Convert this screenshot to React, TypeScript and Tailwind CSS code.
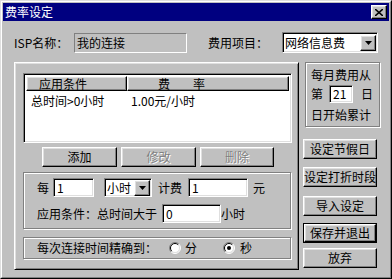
import React from "react";

const font = { fontFamily: '"Noto Sans CJK SC", "Liberation Sans", sans-serif' };

// raised / sunken bevels in the classic Windows look
const raised =
  "border border-t-white border-l-white border-r-black border-b-black shadow-[inset_-1px_-1px_0_#808080,inset_1px_1px_0_#dfdfdf]";
const sunken =
  "border border-t-[#808080] border-l-[#808080] border-r-white border-b-white shadow-[inset_1px_1px_0_#000,inset_-1px_-1px_0_#dfdfdf]";
const etched = "border border-[#808080] shadow-[inset_1px_1px_0_#fff,1px_1px_0_#fff]";

function Btn({ label, disabled, primary, className = "" }: { label: string; disabled?: boolean; primary?: boolean; className?: string }) {
  const inner = (
    <div className={`flex-1 flex items-center justify-center bg-[#c0c0c0] ${raised}`}>
      <span
        className={
          disabled ? "text-[#808080] [text-shadow:1px_1px_0_#fff]" : "text-black"
        }
      >
        {label}
      </span>
    </div>
  );
  if (primary) {
    return <div className={`flex border border-black ${className}`}>{inner}</div>;
  }
  return <div className={`flex ${className}`}>{inner}</div>;
}

function DropBtn() {
  return (
    <div className={`w-[16px] h-[16px] flex items-center justify-center bg-[#c0c0c0] ${raised}`}>
      <svg width="7" height="4" viewBox="0 0 7 4">
        <path d="M0 0H7L3.5 4Z" fill="#000" />
      </svg>
    </div>
  );
}

function Input({ value, className = "" }: { value: string; className?: string }) {
  return (
    <div className={`bg-white flex items-center pl-[3px] ${sunken} ${className}`}>
      <span className="leading-[12px]">{value}</span>
    </div>
  );
}

function Combo({ value, className = "" }: { value: string; className?: string }) {
  return (
    <div className={`bg-white flex items-center justify-between pl-[2px] pr-[1px] ${sunken} ${className}`}>
      <span className="leading-[12px]">{value}</span>
      <DropBtn />
    </div>
  );
}

function Radio({ checked }: { checked?: boolean }) {
  return (
    <svg width="12" height="12" viewBox="0 0 12 12" className="shrink-0">
      <circle cx="6" cy="6" r="5" fill="#fff" />
      <path d="M2.1 9.9A5.5 5.5 0 0 1 9.9 2.1" stroke="#808080" fill="none" />
      <path d="M9.9 2.1A5.5 5.5 0 0 1 2.1 9.9" stroke="#fff" fill="none" />
      <path d="M2.8 9.2A4.5 4.5 0 0 1 9.2 2.8" stroke="#000" fill="none" />
      <path d="M9.2 2.8A4.5 4.5 0 0 1 2.8 9.2" stroke="#dfdfdf" fill="none" />
      {checked && <circle cx="6" cy="6" r="2" fill="#000" />}
    </svg>
  );
}

export default function App() {
  return (
    <div
      className="w-[392px] h-[279px] bg-[#c0c0c0] text-[12px] leading-[12px] text-black border border-t-[#dfdfdf] border-l-[#dfdfdf] border-r-black border-b-black"
      style={font}
    >
      <div className="h-full flex flex-col border border-t-white border-l-white border-r-[#808080] border-b-[#808080] p-px">
        {/* title bar */}
        <div className="h-[18px] bg-[#000080] flex items-center justify-between pl-[2px] pr-[2px]">
          <span className="text-white text-[12px] leading-[12px]">费率设定</span>
          <div className={`w-[16px] h-[14px] flex items-center justify-center bg-[#c0c0c0] ${raised}`}>
            <svg width="8" height="7" viewBox="0 0 8 7">
              <path d="M0 0L8 7M8 0L0 7" stroke="#000" strokeWidth="1.6" />
            </svg>
          </div>
        </div>

        {/* body */}
        <div className="flex-1 flex flex-col pl-[11px]">
          {/* ISP row */}
          <div className="mt-[11px] h-[21px] flex items-center">
            <span className="w-[60px]">ISP名称：</span>
            <div className="w-[113px] h-[20px] flex items-center pl-[2px] border border-t-[#808080] border-l-[#808080] border-r-white border-b-white">
              我的连接
            </div>
            <span className="ml-[21px] w-[74px]">费用项目：</span>
            <Combo value="网络信息费" className="w-[96px] h-[21px]" />
          </div>

          <div className="mt-[9px] flex">
            {/* big raised panel */}
            <div className="w-[285px] h-[208px] border border-t-white border-l-white border-r-black border-b-black shadow-[inset_1px_1px_0_#dfdfdf,inset_-1px_-1px_0_#808080] pl-[8px] pt-[10px] flex flex-col">
              {/* list view */}
              <div className={`w-[269px] h-[70px] bg-white flex flex-col p-[2px] ${sunken}`}>
                <div className="flex h-[15px]">
                  <div className={`w-[101px] flex items-center pl-[12px] bg-[#c0c0c0] ${raised}`}>应用条件</div>
                  <div className={`flex-1 flex items-center pl-[30px] bg-[#c0c0c0] ${raised}`}>
                    <span>费</span>
                    <span className="ml-[23px]">率</span>
                  </div>
                </div>
                <div className="flex mt-[4px]">
                  <span className="w-[100px] pl-[5px]">总时间&gt;0小时</span>
                  <span className="pl-[5px]">1.00元/小时</span>
                </div>
              </div>

              {/* buttons */}
              <div className="mt-[4px] ml-[19px] flex gap-[4px]">
                <Btn label="添加" className="w-[75px] h-[20px]" />
                <Btn label="修改" disabled className="w-[75px] h-[20px]" />
                <Btn label="删除" disabled className="w-[74px] h-[20px]" />
              </div>

              {/* rate group */}
              <div className={`mt-[5px] w-[268px] h-[57px] pl-[13px] pt-[5px] flex flex-col ${etched}`}>
                <div className="flex items-center h-[19px]">
                  <span>每</span>
                  <Input value="1" className="ml-[4px] w-[41px] h-[19px]" />
                  <Combo value="小时" className="ml-[10px] w-[48px] h-[19px]" />
                  <span className="ml-[6px]">计费</span>
                  <Input value="1" className="ml-[6px] w-[60px] h-[19px]" />
                  <span className="ml-[5px]">元</span>
                </div>
                <div className="mt-[7px] flex items-center h-[19px]">
                  <span className="w-[125px]">应用条件：总时间大于</span>
                  <Input value="0" className="w-[59px] h-[19px]" />
                  <span>小时</span>
                </div>
              </div>

              {/* precision group */}
              <div className={`mt-[8px] w-[268px] h-[22px] pl-[13px] flex items-center ${etched}`}>
                <span className="w-[132px]">每次连接时间精确到：</span>
                <Radio />
                <span className="ml-[4px]">分</span>
                <div className="ml-[26px] flex items-center">
                  <Radio checked />
                  <span className="ml-[5px]">秒</span>
                </div>
              </div>
            </div>

            {/* right column */}
            <div className="ml-[4px] w-[76px] flex flex-col">
              <div className={`ml-[2px] w-[75px] h-[65px] pl-[5px] pt-[6px] flex flex-col ${etched}`}>
                <span>每月费用从</span>
                <div className="mt-[4px] flex items-center h-[18px]">
                  <span>第</span>
                  <Input value="21" className="ml-[6px] w-[24px] h-[18px]" />
                  <span className="ml-[8px]">日</span>
                </div>
                <span className="mt-[6px]">日开始累计</span>
              </div>
              <Btn label="设定节假日" className="mt-[12px] w-[74px] h-[20px]" />
              <Btn label="设定打折时段" className="mt-[8px] w-[74px] h-[20px]" />
              <Btn label="导入设定" className="mt-[9px] w-[74px] h-[20px]" />
              <Btn label="保存并退出" primary className="mt-[7px] w-[74px] h-[20px]" />
              <Btn label="放弃" className="mt-[5px] w-[74px] h-[20px]" />
            </div>
          </div>
        </div>
      </div>
    </div>
  );
}
